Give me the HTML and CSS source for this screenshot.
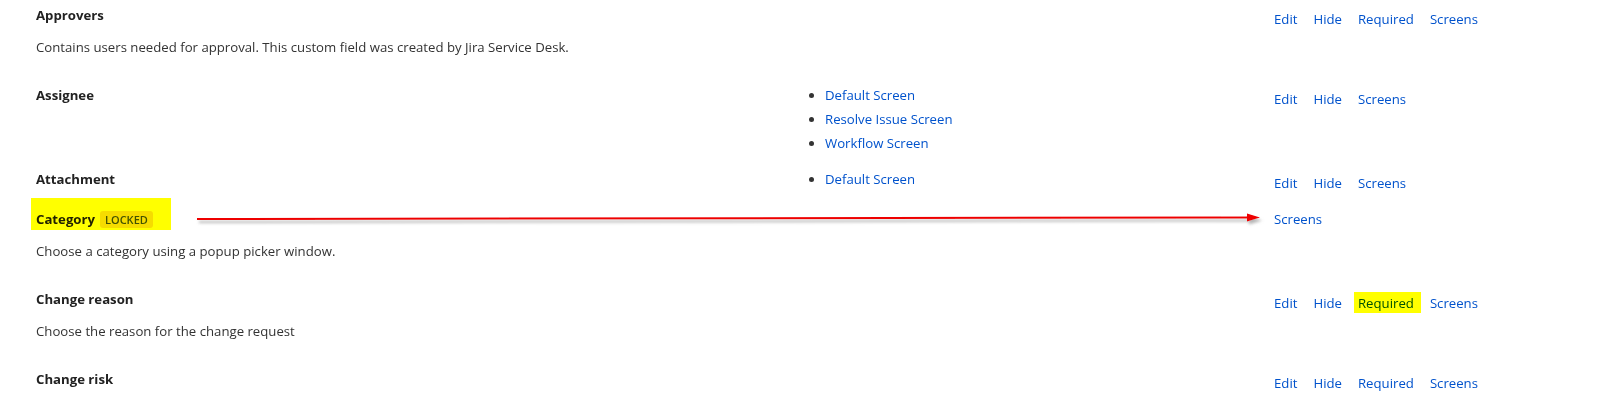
FILE: index.html
```html
<!DOCTYPE html>
<html lang="en">
<head>
<meta charset="utf-8">
<title>Field configuration</title>
<link rel="stylesheet" href="styles.css">
</head>
<body>
<div class="page">
  <div class="fields">
    <div class="row">
      <div class="name-cell">
        <div class="name">Approvers</div>
        <p class="desc">Contains users needed for approval. This custom field was created by Jira Service Desk.</p>
      </div>
      <div class="screens-cell"></div>
      <ul class="ops">
        <li><a href="#">Edit</a></li>
        <li><a href="#">Hide</a></li>
        <li><a href="#">Required</a></li>
        <li><a href="#">Screens</a></li>
      </ul>
    </div>

    <div class="row">
      <div class="name-cell">
        <div class="name">Assignee</div>
      </div>
      <div class="screens-cell">
        <ul class="screens">
          <li><a href="#">Default Screen</a></li>
          <li><a href="#">Resolve Issue Screen</a></li>
          <li><a href="#">Workflow Screen</a></li>
        </ul>
      </div>
      <ul class="ops">
        <li><a href="#">Edit</a></li>
        <li><a href="#">Hide</a></li>
        <li><a href="#">Screens</a></li>
      </ul>
    </div>

    <div class="row">
      <div class="name-cell">
        <div class="name">Attachment</div>
      </div>
      <div class="screens-cell">
        <ul class="screens">
          <li><a href="#">Default Screen</a></li>
        </ul>
      </div>
      <ul class="ops">
        <li><a href="#">Edit</a></li>
        <li><a href="#">Hide</a></li>
        <li><a href="#">Screens</a></li>
      </ul>
    </div>

    <div class="row row--locked">
      <div class="name-cell">
        <div class="name name--marked">Category <span class="lozenge">LOCKED</span></div>
        <p class="desc">Choose a category using a popup picker window.</p>
      </div>
      <div class="screens-cell"></div>
      <ul class="ops">
        <li><a href="#">Screens</a></li>
      </ul>
    </div>

    <div class="row">
      <div class="name-cell">
        <div class="name">Change reason</div>
        <p class="desc">Choose the reason for the change request</p>
      </div>
      <div class="screens-cell"></div>
      <ul class="ops">
        <li><a href="#">Edit</a></li>
        <li><a href="#">Hide</a></li>
        <li><a href="#" class="marked">Required</a></li>
        <li><a href="#">Screens</a></li>
      </ul>
    </div>

    <div class="row">
      <div class="name-cell">
        <div class="name">Change risk</div>
      </div>
      <div class="screens-cell"></div>
      <ul class="ops">
        <li><a href="#">Edit</a></li>
        <li><a href="#">Hide</a></li>
        <li><a href="#">Required</a></li>
        <li><a href="#">Screens</a></li>
      </ul>
    </div>
  </div>

  <svg class="arrow" width="1599" height="403" viewBox="0 0 1599 403" aria-hidden="true">
    <defs>
      <filter id="shadow" x="-5%" y="-200%" width="110%" height="500%">
        <feDropShadow dx="2" dy="3" stdDeviation="1.4" flood-color="#777" flood-opacity="0.55"/>
      </filter>
    </defs>
    <g filter="url(#shadow)">
      <line x1="197" y1="219" x2="1250" y2="217.5" stroke="#ee0000" stroke-width="2"/>
      <polygon points="1247,213.5 1260,217.5 1247,221.5" fill="#ee0000"/>
    </g>
  </svg>
</div>
</body>
</html>
```

FILE: styles.css
```css
html, body {
  margin: 0;
  padding: 0;
  background: #ffffff;
}

body {
  font-family: "Open Sans", "Noto Sans", "Liberation Sans", sans-serif;
  font-size: 13.2px;
  line-height: 20px;
  color: #222222;
}

.page {
  position: relative;
  width: 1599px;
  height: 403px;
  overflow: hidden;
}

.fields {
  margin-top: -3px;
  padding-left: 36px;
}

.row {
  display: grid;
  grid-template-columns: 754px 484px 1fr;
  padding: 8px 0;
}

.name {
  font-weight: 700;
  color: #222222;
  height: 20px;
}

.name--marked {
  position: relative;
  display: inline-flex;
  align-items: center;
  gap: 5px;
}

.name--marked::after {
  content: "";
  position: absolute;
  left: -5px;
  top: -11px;
  right: -18px;
  bottom: -1px;
  background: #ffff00;
  mix-blend-mode: multiply;
  pointer-events: none;
}

.lozenge {
  display: inline-block;
  height: 17px;
  line-height: 17px;
  padding: 0 5px;
  border-radius: 3px;
  background: #f6dc00;
  color: #42526e;
  font-size: 11px;
  font-weight: 600;
  text-transform: uppercase;
}

.desc {
  margin: 12px 0 12px;
  color: #333333;
}

.screens {
  margin: 0;
  padding-left: 35px;
  list-style: disc;
  color: #333333;
}

.screens li + li {
  margin-top: 4px;
}

.ops {
  display: flex;
  gap: 16px;
  margin: 0;
  padding: 4px 0 0;
  list-style: none;
  align-self: start;
}

.row--locked .ops {
  padding-top: 0;
}

a {
  color: #0052cc;
  text-decoration: none;
}

.marked {
  position: relative;
  display: inline-block;
}

.marked::after {
  content: "";
  position: absolute;
  left: -4px;
  top: -1px;
  right: -7px;
  bottom: 0;
  background: #ffff00;
  mix-blend-mode: multiply;
  pointer-events: none;
}

.arrow {
  position: absolute;
  left: 0;
  top: 0;
  pointer-events: none;
}
```
